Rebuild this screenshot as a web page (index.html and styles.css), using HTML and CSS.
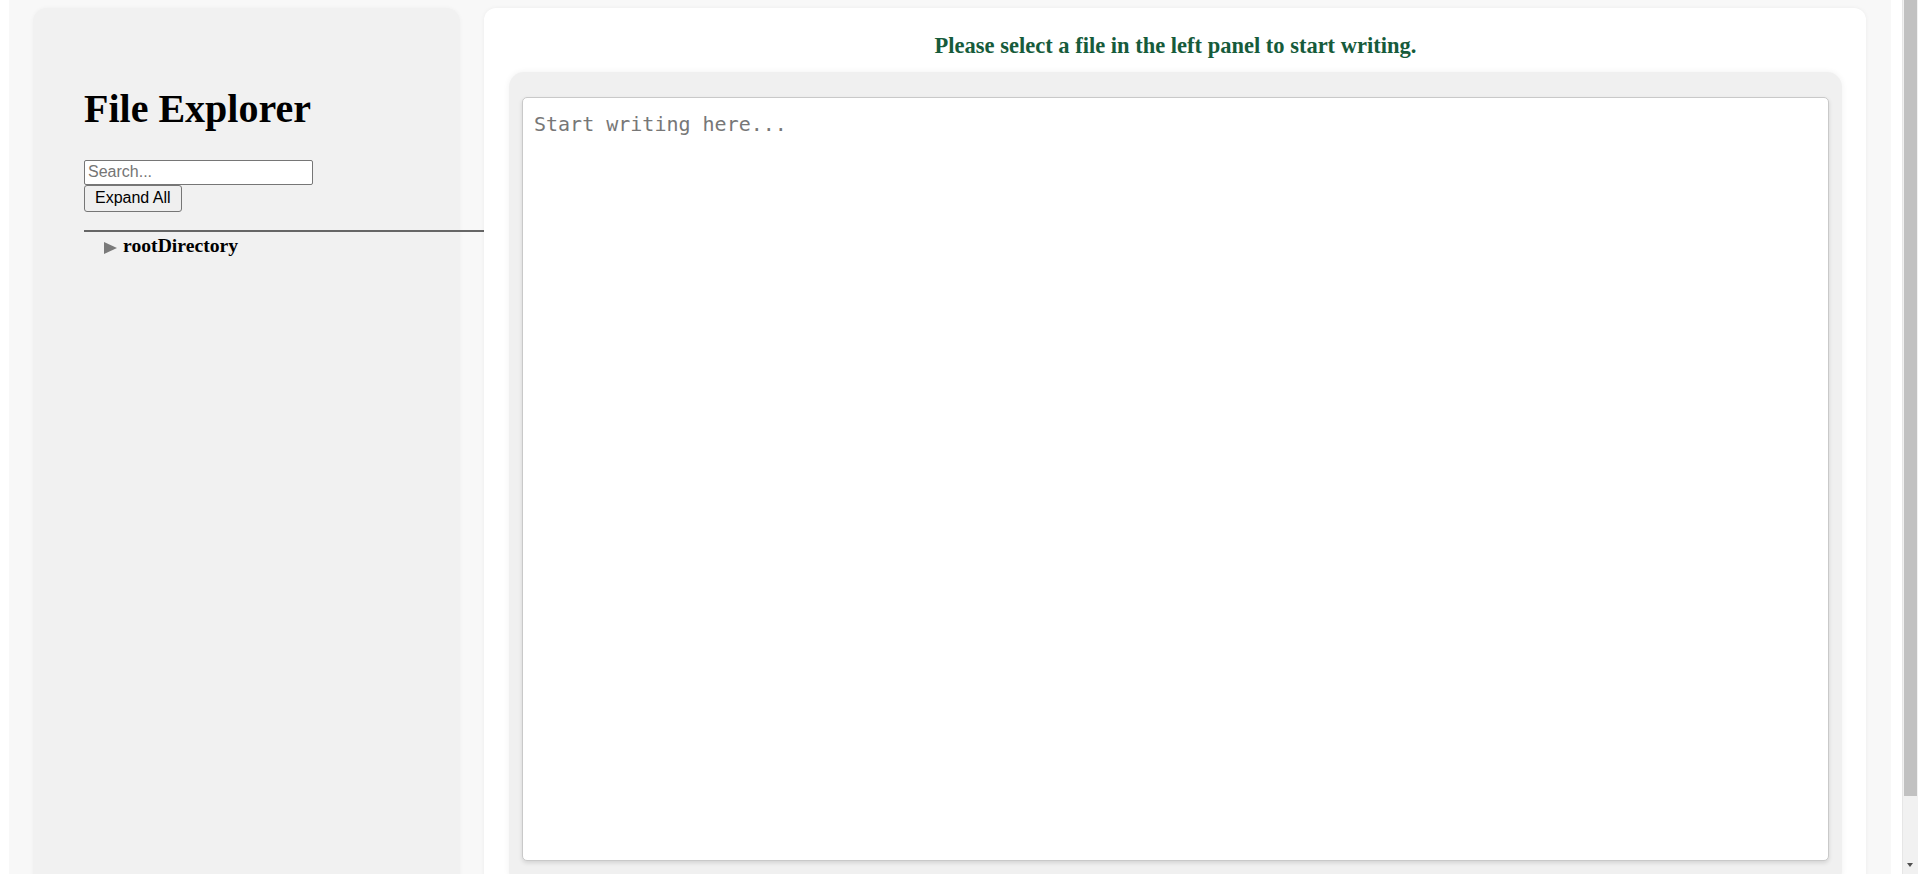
FILE: index.html
```html
<!DOCTYPE html>
<html lang="en">
<head>
<meta charset="utf-8">
<title>File Explorer</title>
<link rel="stylesheet" href="styles.css">
</head>
<body>
<div class="app">
  <aside class="sidebar">
    <h1 class="title">File Explorer</h1>
    <input class="search" type="text" placeholder="Search...">
    <button class="expand-btn" type="button">Expand All</button>
    <ul class="tree">
      <li class="tree-item"><span class="caret"></span><span class="dir-name">rootDirectory</span></li>
    </ul>
  </aside>
  <main class="workspace">
    <h2 class="notice">Please select a file in the left panel to start writing.</h2>
    <div class="editor">
      <textarea class="editor-text" placeholder="Start writing here..."></textarea>
    </div>
  </main>
</div>
<div class="scrollbar" aria-hidden="true">
  <div class="scrollbar-thumb"></div>
  <div class="scrollbar-arrow"></div>
</div>
</body>
</html>
```
FILE: styles.css
```css
html, body {
  margin: 0;
  padding: 0;
  background: #ffffff;
}

body {
  font-family: "Liberation Serif", "Times New Roman", serif;
  color: #000;
  padding-right: 15px;
}

.app {
  display: flex;
  align-items: stretch;
  gap: 24px;
  margin: 0 12px 8px 9px;
  padding: 8px 25px 18px 24px;
  background: #f8f8f8;
}

.sidebar {
  flex: 0 0 427px;
  min-width: 0;
  box-sizing: border-box;
  padding: 50px 50px 50px 51px;
  background: #f1f1f1;
  border-radius: 14px;
  box-shadow: 0 0 4px rgba(0, 0, 0, 0.04);
}

.title {
  margin: 26.8px 0 28.2px;
  font-size: 40px;
  font-weight: bold;
  line-height: normal;
  white-space: nowrap;
}

.search {
  display: block;
  box-sizing: border-box;
  width: 229px;
  height: 25px;
  margin: 0;
  padding: 1px 3px;
  border: 1px solid #767676;
  border-radius: 2px;
  background: #fff;
  font-family: "Liberation Sans", Arial, sans-serif;
  font-size: 16px;
  color: #000;
}

.search::placeholder {
  color: #757575;
}

.expand-btn {
  display: block;
  box-sizing: border-box;
  height: 27px;
  margin: 0;
  padding: 1px 10px;
  border: 1px solid #767676;
  border-radius: 3px;
  background: #efefef;
  font-family: "Liberation Sans", Arial, sans-serif;
  font-size: 16px;
  color: #000;
}

.tree {
  position: relative;
  width: 400px;
  margin: 18px 0 0;
  padding: 0;
  border-top: 2px solid #666666;
  list-style: none;
}

.tree-item {
  margin-top: 2.5px;
  padding-left: 20px;
  font-size: 19.7px;
  font-weight: bold;
  white-space: nowrap;
}

.caret {
  display: inline-block;
  width: 0;
  height: 0;
  margin-right: 6px;
  border-left: 13px solid #7a7a7a;
  border-top: 6px solid transparent;
  border-bottom: 6px solid transparent;
  vertical-align: -2px;
}

.workspace {
  position: relative;
  flex: 1 1 auto;
  min-width: 0;
  box-sizing: border-box;
  padding: 25px 24px 24px 25px;
  background: #ffffff;
  border-radius: 12px;
  box-shadow: 0 0 4px rgba(0, 0, 0, 0.05);
}

.notice {
  margin: 0 0 13px;
  font-size: 22.5px;
  font-weight: bold;
  line-height: normal;
  color: #165b3b;
  text-align: center;
}

.editor {
  padding: 25px 13px;
  background: #f0f0f0;
  border-radius: 15px;
  box-shadow: 0 0 6px rgba(0, 0, 0, 0.06);
}

.editor-text {
  display: block;
  box-sizing: border-box;
  width: 100%;
  height: 764px;
  margin: 0;
  padding: 14px 11px;
  border: 1px solid #c9c9c9;
  border-radius: 5px;
  box-shadow: 0 2px 4px rgba(0, 0, 0, 0.12);
  background: #fff;
  font-family: "DejaVu Sans Mono", monospace;
  font-size: 20px;
  color: #333;
  resize: none;
  outline: none;
}

.editor-text::placeholder {
  color: #777777;
}

/* decorative browser scrollbar, drawn over the page edge */
.scrollbar {
  position: fixed;
  top: 0;
  right: 0;
  width: 16px;
  height: 100vh;
  box-sizing: border-box;
  background: #f1f1f1;
  border-left: 1px solid #e6e6e6;
}

.scrollbar-thumb {
  position: absolute;
  top: 0;
  left: 1px;
  right: 1px;
  height: 796px;
  background: #c1c1c1;
}

.scrollbar-arrow {
  position: absolute;
  bottom: 7px;
  left: 4px;
  width: 0;
  height: 0;
  border-top: 4px solid #505050;
  border-left: 3.5px solid transparent;
  border-right: 3.5px solid transparent;
}
```
